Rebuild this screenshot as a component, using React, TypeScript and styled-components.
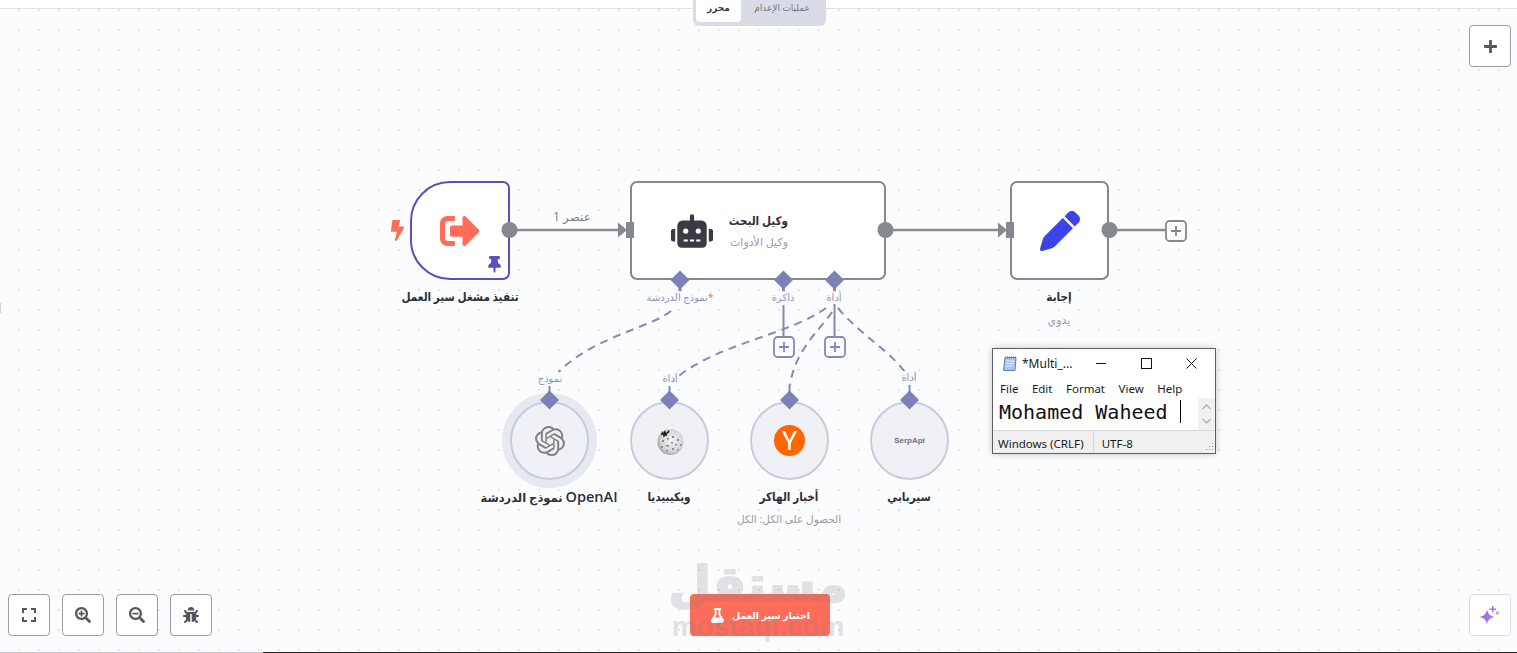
import React from "react";
import styled, { createGlobalStyle } from "styled-components";
import { FaSignOutAlt, FaRobot, FaBolt, FaThumbtack, FaFlask, FaBug, FaSearchPlus, FaSearchMinus, FaPlus } from "react-icons/fa";
import { FaPen } from "react-icons/fa6";
import { SiOpenai } from "react-icons/si";

const Global = createGlobalStyle`
  html, body { margin: 0; padding: 0; background: #fff; }
  body { font-family: "Open Sans", "DejaVu Sans", sans-serif; overflow: hidden; }
`;

const Page = styled.div`
  position: relative;
  width: 1517px;
  height: 653px;
  overflow: hidden;
  display: flex;
  flex-direction: column;
`;
const TopStrip = styled.div`
  height: 8px;
  flex: none;
  background: #fff;
  border-bottom: 1px solid #e0e1ec;
`;
const Canvas = styled.div`
  flex: 1;
  background-color: #fbfcfe;
  background-image: radial-gradient(circle at 1px 1px, #e3e5ec 1px, transparent 1.3px);
  background-size: 20px 20px;
  background-position: 18px 0px;
`;
const BottomRule = styled.div`
  height: 1px;
  flex: none;
  background: linear-gradient(to right, #c9cad0 263px, #222428 263px);
`;
const EdgeTick = styled.div`
  position: absolute;
  left: 0;
  top: 303px;
  width: 1px;
  height: 10px;
  background: #d5d6e4;
`;

const Tabs = styled.div`
  position: absolute;
  top: 0;
  left: 693px;
  width: 133px;
  height: 26px;
  box-sizing: border-box;
  padding: 0 3px 4px;
  background: #d9dce6;
  border-radius: 0 0 6px 6px;
  display: flex;
  align-items: stretch;
  font-size: 9px;
`;
const Tab = styled.div<{ $active?: boolean }>`
  display: flex;
  align-items: flex-start;
  justify-content: center;
  padding-top: 1px;
  line-height: 14px;
  white-space: nowrap;
  flex: ${(p) => (p.$active ? "0 0 45px" : "1")};
  background: ${(p) => (p.$active ? "#fff" : "transparent")};
  color: ${(p) => (p.$active ? "#35353d" : "#75767f")};
  font-weight: ${(p) => (p.$active ? 600 : 400)};
  border-radius: 0 0 4px 4px;
`;

const SquareButton = styled.div<{ $soft?: boolean }>`
  width: 42px;
  height: 42px;
  box-sizing: border-box;
  background: #fff;
  border: 1px solid ${(p) => (p.$soft ? "#dcdde8" : "#9b9ca6")};
  border-radius: 4px;
  display: flex;
  align-items: center;
  justify-content: center;
  color: #55565e;
`;
const AddCorner = styled.div`
  position: absolute;
  top: 25px;
  right: 6px;
`;
const AiCorner = styled.div`
  position: absolute;
  bottom: 17px;
  right: 6px;
`;
const ZoomBar = styled.div`
  position: absolute;
  left: 8px;
  bottom: 17px;
  display: flex;
  gap: 12px;
`;

const Diagram = styled.div`
  position: absolute;
  inset: 0;
`;
const Box = styled.div<{ $x: number; $w: number; $trigger?: boolean }>`
  position: absolute;
  left: ${(p) => p.$x}px;
  top: 181px;
  width: ${(p) => p.$w}px;
  height: 99px;
  box-sizing: border-box;
  background: #fff;
  border: 2px solid ${(p) => (p.$trigger ? "#5a4fc0" : "#85888e")};
  border-radius: ${(p) => (p.$trigger ? "40px 7px 7px 40px" : "7px")};
  display: flex;
  align-items: center;
  justify-content: center;
`;
const AgentBody = styled.div`
  flex: 1;
  display: flex;
  align-items: center;
  padding-left: 39px;
  gap: 15px;
  color: #3a3a42;
`;
const AgentText = styled.div`
  direction: rtl;
  display: flex;
  flex-direction: column;
  gap: 6px;
  width: 60px;
  align-items: flex-start;
`;
const AgentName = styled.div`
  font-size: 12px;
  font-weight: 700;
  line-height: 17px;
  color: #2f2f36;
  white-space: nowrap;
  transform: scaleX(0.87);
  transform-origin: right center;
`;
const AgentSub = styled.div`
  font-size: 11px;
  line-height: 14px;
  color: #9a9aa6;
  white-space: nowrap;
`;
const Pin = styled.div`
  position: absolute;
  right: 5px;
  bottom: 5px;
  color: #5a4fc0;
  display: flex;
`;
const Bolt = styled.div`
  position: absolute;
  left: 387px;
  top: 220px;
  color: #ff6d5a;
  display: flex;
`;

const Name = styled.div<{ $x: number; $y: number; $size?: number }>`
  position: absolute;
  left: ${(p) => p.$x}px;
  top: ${(p) => p.$y}px;
  transform: translateX(-50%);
  direction: rtl;
  font-size: ${(p) => p.$size ?? 10.5}px;
  font-weight: 700;
  line-height: 18px;
  color: #2f2f36;
  white-space: nowrap;
`;
const TallName = styled(Name)`
  font-size: 12px;
  transform: translateX(-50%) scaleX(0.87);
`;
const LatinWord = styled.span`
  font-size: 14.5px;
  font-weight: 600;
`;
const Sub = styled(Name)`
  font-weight: 400;
  line-height: 14px;
  color: #9a9aa6;
`;
const PortLabel = styled(Name)<{ $grey?: boolean }>`
  font-size: ${(p) => p.$size ?? 10}px;
  font-weight: 400;
  line-height: 13px;
  color: ${(p) => (p.$grey ? "#7c7d85" : "#8f92bd")};
  background: rgba(251, 252, 254, 0.75);
`;
const Required = styled.span`
  color: #ff6d2a;
`;

const Circle = styled.div<{ $x: number; $halo?: boolean }>`
  position: absolute;
  left: ${(p) => p.$x}px;
  top: 401px;
  width: 79px;
  height: 79px;
  box-sizing: border-box;
  border-radius: 50%;
  background: #f0f1f6;
  border: 2px solid #c8cbdb;
  display: flex;
  align-items: center;
  justify-content: center;
  box-shadow: ${(p) => (p.$halo ? "0 0 0 8px #e7e9f0" : "none")};
`;
const HnBadge = styled.div`
  width: 31px;
  height: 31px;
  border-radius: 50%;
  background: #ff6600;
  color: #fff;
  display: flex;
  align-items: center;
  justify-content: center;
  font-size: 26px;
  font-weight: 400;
  line-height: 1;
  font-family: "Roboto", sans-serif;
`;
const SerpLogo = styled.div`
  font-family: "Liberation Sans", sans-serif;
  font-size: 8px;
  font-weight: 700;
  color: #6f7078;
`;
const EdgeLayer = styled.svg`
  position: absolute;
  inset: 0;
  pointer-events: none;
`;

const TestButton = styled.div`
  position: absolute;
  left: 690px;
  top: 594px;
  width: 140px;
  height: 42px;
  border-radius: 4px;
  background: #ff6d5a;
  color: #fff;
  display: flex;
  align-items: center;
  justify-content: center;
  gap: 7px;
  font-size: 9.5px;
  font-weight: 700;
  direction: rtl;
`;
const Watermark = styled.div`
  position: absolute;
  left: 672px;
  top: 552px;
  width: 172px;
  display: flex;
  flex-direction: column;
  align-items: center;
  color: #787a80;
  opacity: 0.2;
  font-weight: 700;
  pointer-events: none;
`;
const WatermarkArabic = styled.div`
  font-size: 49px;
  line-height: 60px;
  height: 60px;
  direction: rtl;
  white-space: nowrap;
  -webkit-text-stroke: 2px #787a80;
`;
const WatermarkLatin = styled.div`
  font-family: "Liberation Sans", sans-serif;
  font-size: 28px;
  line-height: 30px;
  white-space: nowrap;
`;

const Notepad = styled.div`
  position: absolute;
  left: 992px;
  top: 348px;
  width: 224px;
  height: 106px;
  box-sizing: border-box;
  background: #fff;
  border: 1px solid #5f5f5f;
  box-shadow: 0 0 7px rgba(0, 0, 0, 0.22);
  display: flex;
  flex-direction: column;
  font-family: "Noto Sans", sans-serif;
  color: #1a1a1a;
`;
const TitleBar = styled.div`
  height: 29px;
  flex: none;
  display: flex;
  align-items: center;
  padding-left: 9px;
  font-size: 12px;
`;
const TitleText = styled.div`
  margin-left: 4px;
  width: 57px;
  flex: none;
  white-space: nowrap;
`;
const WinControl = styled.div`
  width: 45px;
  height: 29px;
  flex: none;
  display: flex;
  align-items: center;
  justify-content: center;
`;
const MenuBar = styled.div`
  height: 20px;
  flex: none;
  display: flex;
  align-items: center;
  gap: 13.5px;
  padding-left: 7px;
  font-size: 11.5px;
`;
const EditArea = styled.div`
  flex: 1;
  display: flex;
  min-height: 0;
`;
const EditText = styled.div`
  flex: 1;
  padding: 1px 0 0 6px;
  display: flex;
  align-items: flex-start;
  font-family: "DejaVu Sans Mono", monospace;
  font-size: 20px;
  line-height: 26px;
  color: #111;
  white-space: pre;
`;
const Caret = styled.div`
  width: 1px;
  height: 23px;
  margin: 1px 0 0 0;
  background: #000;
`;
const ScrollTrack = styled.div`
  width: 17px;
  background: #f1f1f1;
  display: flex;
  flex-direction: column;
  justify-content: space-between;
  align-items: center;
  padding: 6px 0;
  box-sizing: border-box;
`;
const StatusBar = styled.div`
  height: 23px;
  flex: none;
  box-sizing: border-box;
  background: #f0f0f0;
  border-top: 1px solid #d7d7d7;
  display: flex;
  align-items: center;
  font-size: 11.5px;
  position: relative;
`;
const StatusCell = styled.div`
  padding: 2px 9px 0 5px;
  height: 100%;
  display: flex;
  align-items: center;
  border-right: 1px solid #d7d7d7;
  box-sizing: border-box;
`;
const StatusCellLast = styled.div`
  padding: 2px 0 0 8px;
`;
const Grip = styled.svg`
  position: absolute;
  right: 1px;
  bottom: 1px;
`;

const Expand = () => (
  <svg width="14" height="14" viewBox="0 0 14 14" fill="none" stroke="#55565e" strokeWidth="2">
    <path d="M1 5V1h4M9 1h4v4M13 9v4H9M5 13H1V9" />
  </svg>
);

const Sparkle = () => (
  <svg width="26" height="26" viewBox="0 0 26 26">
    <defs>
      <linearGradient id="sp" x1="0" y1="0" x2="1" y2="1">
        <stop offset="0" stopColor="#7d6ae0" />
        <stop offset="1" stopColor="#c77fdc" />
      </linearGradient>
    </defs>
    <path d="M10 7.5c1 4.5 2.5 6.5 7.5 7.5-5 1-6.500 3-7.500 7.500-1-4.500-2.500-6.500-7.500-7.500 5-1 6.500-3 7.500-7.500z" fill="url(#sp)" />
    <path d="M15 4h1.500v2.500H19V8h-2.500v2.500H15V8h-2.500V6.500H15z" fill="#9a78e2" />
    <circle cx="20.500" cy="11" r="1.800" fill="#e59ad0" />
  </svg>
);

const WikiGlobe = () => (
  <svg width="28" height="30" viewBox="0 0 28 30">
    <defs>
      <radialGradient id="wk" cx="0.55" cy="0.45" r="0.6">
        <stop offset="0" stopColor="#f4f4f4" />
        <stop offset="0.7" stopColor="#d4d4d4" />
        <stop offset="1" stopColor="#9a9a9a" />
      </radialGradient>
    </defs>
    <circle cx="14.500" cy="16" r="13" fill="url(#wk)" />
    <g fill="#8a8a8a">
      <rect x="6" y="14" width="2" height="2" />
      <rect x="11" y="12" width="2" height="1.500" />
      <rect x="16" y="10" width="2" height="2" />
      <rect x="21" y="13" width="2" height="2" />
      <rect x="24" y="18" width="1.500" height="2" />
      <rect x="10" y="19" width="3" height="1.500" />
      <rect x="16" y="22" width="2" height="2" />
      <rect x="5" y="20" width="2" height="2" />
      <rect x="15" y="16" width="2" height="1.500" />
      <rect x="19" y="18" width="2" height="1.500" />
      <rect x="10" y="24" width="2" height="1.500" />
      <rect x="21" y="23" width="1.500" height="1.500" />
    </g>
    <path d="M6 5l1.500 2 1.500-3 1 3 3-3 .5 2-3 2.500 1 2-2-1-2 2-.5-3-2 1z" fill="#1f1f1f" />
  </svg>
);

const NotepadIcon = () => (
  <svg width="16" height="17" viewBox="0 0 16 17">
    <path d="M3 2.500h11l-1 13H1.500z" fill="#a9c6ea" stroke="#5d7fae" strokeWidth="1" />
    <path d="M3 2.500h11" stroke="#7d7d7d" strokeWidth="2" strokeDasharray="1 1" />
    <path d="M4 6h8M3.800 8.500h8M3.500 11h8" stroke="#dfeaf8" strokeWidth="1" />
  </svg>
);

const Diamond = ({ x, y }: { x: number; y: number }) => (
  <polygon points={`${x},${y - 9.5} ${x + 9.5},${y} ${x},${y + 9.5} ${x - 9.5},${y}`} fill="#7d80b6" />
);

const PlusBox = ({ x, y, c }: { x: number; y: number; c: string }) => (
  <g>
    <rect x={x} y={y} width="20" height="20" rx="3.500" fill="#fbfcfe" stroke={c} strokeWidth="1.800" />
    <path d={`M${x + 10} ${y + 5}v10M${x + 5} ${y + 10}h10`} stroke={c} strokeWidth="1.800" fill="none" />
  </g>
);

const InputPort = ({ x }: { x: number }) => (
  <g fill="#85888e">
    <polygon points={`${x - 8},222.500 ${x + 1},230 ${x - 8},237.500`} />
    <rect x={x} y="222" width="8" height="16" />
  </g>
);

export default function App() {
  return (
    <Page>
      <Global />
      <TopStrip />
      <Canvas />
      <BottomRule />
      <EdgeTick />

      <Diagram>
        <Box $x={410} $w={100} $trigger>
          <FaSignOutAlt size={40} color="#ff6d5a" />
          <Pin>
            <FaThumbtack size={17} />
          </Pin>
        </Box>
        <Bolt>
          <FaBolt size={21} />
        </Bolt>
        <TallName $x={460} $y={288}>تنفيذ مشغل سير العمل</TallName>

        <Box $x={630} $w={256}>
          <AgentBody>
            <FaRobot size={42} />
            <AgentText>
              <AgentName>وكيل البحث</AgentName>
              <AgentSub>وكيل الأدوات</AgentSub>
            </AgentText>
          </AgentBody>
        </Box>

        <Box $x={1010} $w={99}>
          <FaPen size={40} color="#3b44e8" />
        </Box>
        <TallName $x={1059} $y={288}>إجابة</TallName>
        <Sub $x={1059} $y={313} $size={11}>يدوي</Sub>

        <Circle $x={510} $halo>
          <SiOpenai size={30} color="#7f7f84" />
        </Circle>
        <Circle $x={630}>
          <WikiGlobe />
        </Circle>
        <Circle $x={750}>
          <HnBadge>Y</HnBadge>
        </Circle>
        <Circle $x={870}>
          <SerpLogo>SerpApi</SerpLogo>
        </Circle>

        <EdgeLayer width="1517" height="653" viewBox="0 0 1517 653">
          <g stroke="#888b90" strokeWidth="2.500" fill="none">
            <path d="M510 230H620" />
            <path d="M886 230H1000" />
            <path d="M1110 230H1166" />
          </g>
          <InputPort x={626} />
          <InputPort x={1006} />
          <circle cx="509.500" cy="230" r="8" fill="#85888e" />
          <circle cx="885.500" cy="230" r="8" fill="#85888e" />
          <circle cx="1109.500" cy="230" r="8" fill="#85888e" />
          <PlusBox x={1166} y={221} c="#85888e" />

          <g stroke="#8588bc" strokeWidth="2" strokeDasharray="8 6" fill="none">
            <path d="M671 311C650 328 590 338 558 373" />
            <path d="M826 308C790 335 710 345 672 382" />
            <path d="M832 312C820 330 795 350 790 385" />
            <path d="M838 308C860 335 890 350 907 375" />
          </g>
          <g stroke="#8588bc" strokeWidth="2" fill="none">
            <path d="M783.500 305V336" />
            <path d="M834.500 304V336" />
            <path d="M549.500 386V400" />
            <path d="M669.500 386V400" />
            <path d="M789.500 385V400" />
            <path d="M909.500 385V400" />
            <path d="M680 285V292M783.500 285V292M834.500 285V292" strokeWidth="3" />
          </g>
          <PlusBox x={774} y={337} c="#8588bc" />
          <PlusBox x={825} y={337} c="#8588bc" />

          <Diamond x={680} y={280} />
          <Diamond x={783.500} y={280} />
          <Diamond x={834.500} y={280} />
          <Diamond x={549.500} y={400} />
          <Diamond x={669.500} y={400} />
          <Diamond x={789.500} y={400} />
          <Diamond x={909.500} y={400} />
        </EdgeLayer>

        <PortLabel $x={572} $y={210} $size={12} $grey>عنصر 1</PortLabel>
        <PortLabel $x={680} $y={291}><Required>*</Required>نموذج الدردشة</PortLabel>
        <PortLabel $x={783} $y={291}>ذاكرة</PortLabel>
        <PortLabel $x={834} $y={291}>أداة</PortLabel>
        <PortLabel $x={550} $y={372}>نموذج</PortLabel>
        <PortLabel $x={670} $y={372}>أداة</PortLabel>
        <PortLabel $x={909} $y={371}>أداة</PortLabel>

        <Name $x={549} $y={488} $size={11.500}><LatinWord>OpenAI</LatinWord> نموذج الدردشة</Name>
        <TallName $x={669} $y={488}>ويكيبيديا</TallName>
        <TallName $x={789} $y={488}>أخبار الهاكر</TallName>
        <TallName $x={909} $y={488}>سيربابي</TallName>
        <Sub $x={789} $y={512}>الحصول على الكل: الكل</Sub>
      </Diagram>

      <Tabs>
        <Tab $active>محرر</Tab>
        <Tab>عمليات الإعدام</Tab>
      </Tabs>

      <AddCorner>
        <SquareButton>
          <FaPlus size={15} />
        </SquareButton>
      </AddCorner>
      <ZoomBar>
        <SquareButton><Expand /></SquareButton>
        <SquareButton><FaSearchPlus size={16} /></SquareButton>
        <SquareButton><FaSearchMinus size={16} /></SquareButton>
        <SquareButton><FaBug size={16} /></SquareButton>
      </ZoomBar>
      <AiCorner>
        <SquareButton $soft><Sparkle /></SquareButton>
      </AiCorner>

      <TestButton>
        <span>اختبار سير العمل</span>
        <FaFlask size={15} />
      </TestButton>
      <Watermark>
        <WatermarkArabic>مستقل</WatermarkArabic>
        <WatermarkLatin>mostaql.com</WatermarkLatin>
      </Watermark>

      <Notepad>
        <TitleBar>
          <NotepadIcon />
          <TitleText>*Multi_...</TitleText>
          <WinControl>
            <svg width="11" height="11"><path d="M0 5.500h10" stroke="#111" strokeWidth="1" /></svg>
          </WinControl>
          <WinControl>
            <svg width="11" height="11"><rect x="0.500" y="0.500" width="10" height="10" fill="none" stroke="#111" /></svg>
          </WinControl>
          <WinControl>
            <svg width="11" height="11"><path d="M0.500 0.500l10 10M10.500 0.500l-10 10" stroke="#111" strokeWidth="1" /></svg>
          </WinControl>
        </TitleBar>
        <MenuBar>
          <span>File</span>
          <span>Edit</span>
          <span>Format</span>
          <span>View</span>
          <span>Help</span>
        </MenuBar>
        <EditArea>
          <EditText>
            Mohamed Waheed <Caret />
          </EditText>
          <ScrollTrack>
            <svg width="9" height="6"><path d="M0.500 5l4-4 4 4" fill="none" stroke="#b5b5b5" strokeWidth="1.500" /></svg>
            <svg width="9" height="6"><path d="M0.500 1l4 4 4-4" fill="none" stroke="#b5b5b5" strokeWidth="1.500" /></svg>
          </ScrollTrack>
        </EditArea>
        <StatusBar>
          <StatusCell>Windows (CRLF)</StatusCell>
          <StatusCellLast>UTF-8</StatusCellLast>
          <Grip width="10" height="10">
            <path d="M8 1h1v1H8zM5 4h1v1H5zM8 4h1v1H8zM2 7h1v1H2zM5 7h1v1H5zM8 7h1v1H8z" fill="#9a9a9a" />
          </Grip>
        </StatusBar>
      </Notepad>
    </Page>
  );
}
